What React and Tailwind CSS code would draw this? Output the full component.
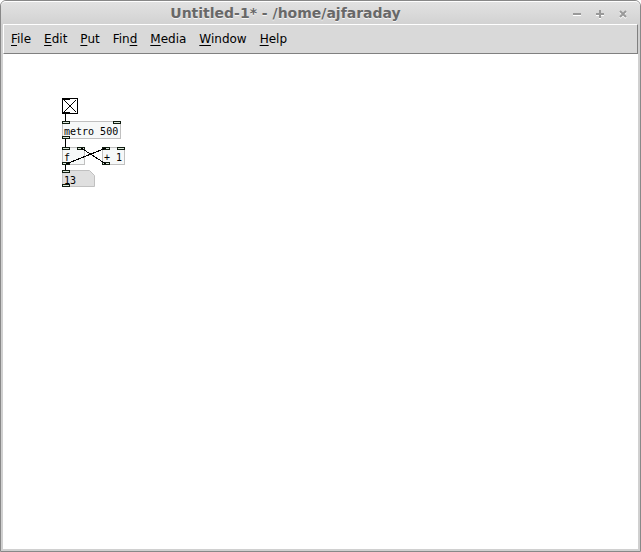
import { useState } from 'react';

const menus = [
  { label: 'File', key: 0 },
  { label: 'Edit', key: 0 },
  { label: 'Put', key: 0 },
  { label: 'Find', key: 3 },
  { label: 'Media', key: 0 },
  { label: 'Window', key: 0 },
  { label: 'Help', key: 0 },
];

const MenuItem = ({ label, hotkey }) => (
  <button type="button" className="leading-4">
    {label.slice(0, hotkey)}
    <span className="underline decoration-1 underline-offset-2">{label[hotkey]}</span>
    {label.slice(hotkey + 1)}
  </button>
);

// Small inlet / outlet marker on the edge of a box
const Iolet = () => <span className="block h-[3px] w-2 border border-[#101c10] bg-[#dce8dc]" />;

const Iolets = ({ count }) => (
  <div className="flex h-[3px] justify-between">
    {Array.from({ length: count }, (_, i) => (
      <Iolet key={i} />
    ))}
  </div>
);

const PatchObject = ({ text, inlets, className }) => (
  <div className={`absolute h-[18px] bg-[#f6f8f8] inset-ring inset-ring-[#c0c0c0] ${className}`}>
    <Iolets count={inlets} />
    <p className="h-3 px-0.5 text-[10px] leading-4 whitespace-pre">{text}</p>
    <Iolets count={1} />
  </div>
);

const Toggle = () => {
  const [on, setOn] = useState(true);

  return (
    <label className="absolute top-11 left-[59px] block size-4">
      <input
        type="checkbox"
        aria-label="Toggle metro"
        checked={on}
        onChange={() => setOn(!on)}
        className="block size-4 appearance-none border border-black bg-white"
      />
      {on && (
        <svg viewBox="0 0 16 16" className="pointer-events-none absolute inset-0 size-4" stroke="black">
          <path d="M2 2L14 14M14 2L2 14" />
        </svg>
      )}
      <span className="absolute top-0 left-0 h-0.5 w-2 bg-black" />
      <span className="absolute bottom-0 left-0 h-0.5 w-2 bg-black" />
    </label>
  );
};

const NumberBox = () => {
  const [value, setValue] = useState('13');

  return (
    <div className="absolute top-[116px] left-[59px] h-[17px] w-[33px]">
      <svg viewBox="0 0 33 17" className="absolute inset-0 h-[17px] w-[33px]">
        <path d="M.5 .5H27.5L32.5 5.5V16.5H.5Z" fill="#dfdfdf" stroke="#c0c0c0" />
      </svg>
      <div className="relative">
        <Iolets count={1} />
        <input
          type="text"
          aria-label="Number"
          value={value}
          onChange={(e) => setValue(e.target.value)}
          className="block h-[11px] w-full bg-transparent px-0.5 pt-1 text-[10px] leading-[11px] outline-none"
        />
        <Iolets count={1} />
      </div>
    </div>
  );
};

const Patch = () => (
  <main className="relative flex-1 bg-white font-['DejaVu_Sans_Mono',monospace] text-black">
    <Toggle />
    <PatchObject text="metro 500" inlets={2} className="top-[67px] left-[59px] w-[59px]" />
    <PatchObject text="f" inlets={2} className="top-[93px] left-[59px] w-[23px]" />
    <PatchObject text="+ 1" inlets={2} className="top-[93px] left-[99px] w-[23px]" />
    <NumberBox />

    {/* Patch cords */}
    <svg
      viewBox="0 0 140 150"
      className="pointer-events-none absolute top-0 left-0 h-[150px] w-[140px]"
      stroke="black"
      shapeRendering="crispEdges"
    >
      <path d="M62.5 60V67M62.5 85V93M62.5 111V116" />
      <path d="M63 110L103 94M103 110L78 94" />
    </svg>
  </main>
);

const App = () => (
  <div className="flex min-h-screen flex-col rounded-t-md border border-[#888] bg-[#d0d0d0] font-['DejaVu_Sans',sans-serif]">
    {/* Title bar */}
    <header className="flex h-[23px] items-center rounded-t-[5px] border-t border-white bg-linear-to-b from-[#e2e2e2] to-[#d2d2d2] pr-2.5 text-[#686868]">
      <h1 className="flex-1 text-center text-[14px] leading-4 font-bold [text-shadow:0_1px_0_#f4f4f4]">
        Untitled-1* - /home/ajfaraday
      </h1>
      <div className="flex gap-[9px]">
        <button type="button" aria-label="Minimize">
          <svg viewBox="0 0 14 14" className="size-3.5" strokeWidth="2">
            <path d="M3 9H11" stroke="white" />
            <path d="M3 8H11" stroke="#999" />
          </svg>
        </button>
        <button type="button" aria-label="Maximize">
          <svg viewBox="0 0 14 14" className="size-3.5" strokeWidth="2">
            <path d="M3 9H11M7 5V13" stroke="white" />
            <path d="M3 8H11M7 4V12" stroke="#999" />
          </svg>
        </button>
        <button type="button" aria-label="Close">
          <svg viewBox="0 0 14 14" className="size-3.5" strokeWidth="2">
            <path d="M4 6L10 12M10 6L4 12" stroke="white" />
            <path d="M4 5L10 11M10 5L4 11" stroke="#999" />
          </svg>
        </button>
      </div>
    </header>

    <div className="mx-0.5 mb-0.5 flex flex-1 flex-col">
      <nav className="flex h-[30px] items-center gap-[13px] border border-t-white border-r-[#808080] border-b-[#808080] border-l-white bg-[#d9d9d9] px-[7px] text-[12px] text-black">
        {menus.map((menu) => (
          <MenuItem key={menu.label} label={menu.label} hotkey={menu.key} />
        ))}
      </nav>
      <Patch />
    </div>
  </div>
);

export default App;
